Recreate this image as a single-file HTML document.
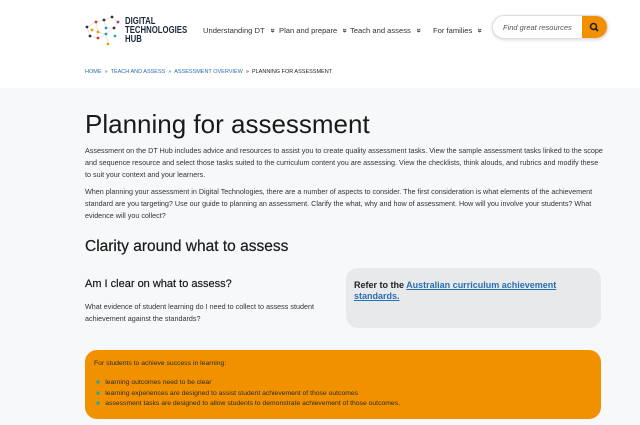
<!DOCTYPE html>
<html><head><meta charset="utf-8"><style>
*{margin:0;padding:0;box-sizing:border-box}
body{width:640px;height:425px;overflow:hidden;background:#f7f8fa;font-family:"Liberation Sans",sans-serif;color:#222;position:relative}
.hdr{position:absolute;left:0;top:0;width:640px;height:88px;background:#fff}
.abs{position:absolute}
.nav{font-size:7.6px;color:#333;top:26px;white-space:nowrap}
.ch{display:inline-block;margin-left:6px;font-size:8px;font-weight:bold;transform:rotate(90deg)}
.p{font-size:7.2px;line-height:12px;color:#333;left:85px;width:520px}
a{color:#2a6fb0}
</style></head><body>
<div class="hdr"></div>
<svg class="abs" style="left:84px;top:14px" width="40" height="34">
<g stroke="#ccc" stroke-width="0.5" fill="none"><path d="M3 13L12 8L20 6L28 3L34 8L30 14L22 20L14 24L6 22L3 13M12 8L14 18L22 20M20 6L22 14L30 14M22 20L24 30"/></g>
<g><circle cx="3" cy="13" r="1.4" fill="#333"/><circle cx="12" cy="8" r="1.4" fill="#d33"/><circle cx="20" cy="6" r="1.4" fill="#333"/><circle cx="28" cy="3" r="1.4" fill="#333"/><circle cx="34" cy="8" r="1.4" fill="#a3a"/><circle cx="30" cy="14" r="1.4" fill="#333"/><circle cx="22" cy="20" r="1.4" fill="#2aa"/><circle cx="14" cy="24" r="1.4" fill="#d33"/><circle cx="6" cy="22" r="1.4" fill="#333"/><circle cx="14" cy="18" r="1.4" fill="#e90"/><circle cx="22" cy="14" r="1.4" fill="#29c"/><circle cx="24" cy="30" r="1.4" fill="#e90"/><circle cx="8" cy="16" r="1.4" fill="#e90"/><circle cx="31" cy="22" r="1.4" fill="#2aa"/></g>
</svg>
<div class="abs" style="left:125px;top:17px;font-weight:bold;font-size:10.5px;line-height:9px;color:#1e2a3a;transform:scaleX(0.74);transform-origin:0 0">DIGITAL<br>TECHNOLOGIES<br>HUB</div>
<div class="abs nav" style="left:203px">Understanding DT<span class="ch">»</span></div>
<div class="abs nav" style="left:279px">Plan and prepare<span class="ch">»</span></div>
<div class="abs nav" style="left:350px">Teach and assess<span class="ch">»</span></div>
<div class="abs nav" style="left:433px">For families<span class="ch">»</span></div>
<div class="abs" style="left:492px;top:15px;width:116px;height:24px;border:1px solid #ddd;border-radius:12px;background:#fff;box-shadow:0 1px 3px rgba(0,0,0,.15);overflow:hidden">
<div style="position:absolute;left:10px;top:7px;font-size:7.5px;font-style:italic;color:#555">Find great resources</div>
<div style="position:absolute;right:0;top:0;width:25px;height:24px;background:#f29100"><svg width="25" height="24"><circle cx="11.5" cy="10.5" r="3" fill="none" stroke="#222" stroke-width="1.6"/><path d="M13.7 12.7L16 15" stroke="#222" stroke-width="1.8"/></svg></div></div>
<div class="abs" style="left:85px;top:69px;font-size:5.5px;color:#222"><a>HOME</a> &nbsp;<span style="color:#2a6fb0">»</span>&nbsp; <a>TEACH AND ASSESS</a> &nbsp;<span style="color:#2a6fb0">»</span>&nbsp; <a>ASSESSMENT OVERVIEW</a> &nbsp;»&nbsp; PLANNING FOR ASSESSMENT</div>
<div class="abs" style="left:85px;top:109px;font-size:26px;color:#1a1a1a">Planning for assessment</div>
<div class="abs p" style="top:145px">Assessment on the DT Hub includes advice and resources to assist you to create quality assessment tasks. View the sample assessment tasks linked to the scope and sequence resource and select those tasks suited to the curriculum content you are assessing. View the checklists, think alouds, and rubrics and modify these to suit your context and your learners.</div>
<div class="abs p" style="top:186px">When planning your assessment in Digital Technologies, there are a number of aspects to consider. The first consideration is what elements of the achievement standard are you targeting? Use our guide to planning an assessment. Clarify the what, why and how of assessment. How will you involve your students? What evidence will you collect?</div>
<div class="abs" style="left:85px;top:238px;font-size:15.5px;color:#1a1a1a;-webkit-text-stroke:0.2px #1a1a1a">Clarity around what to assess</div>
<div class="abs" style="left:85px;top:278px;font-size:11px;color:#1a1a1a;-webkit-text-stroke:0.2px #1a1a1a">Am I clear on what to assess?</div>
<div class="abs p" style="top:301px;width:240px">What evidence of student learning do I need to collect to assess student achievement against the standards?</div>
<div class="abs" style="left:346px;top:268px;width:255px;height:60px;background:#e8e9eb;border-radius:12px;padding:12px 8px;font-size:9px;font-weight:bold;line-height:11px;color:#222">Refer to the <a style="color:#2a6fb0;text-decoration:underline">Australian curriculum achievement standards.</a></div>
<div class="abs" style="left:85px;top:350px;width:516px;height:69px;background:#f29100;border-radius:12px;font-size:6.8px;color:#2a2a2a">
<div style="position:absolute;left:9px;top:10px">For students to achieve success in learning:</div>
<div style="position:absolute;left:11px;top:28px;line-height:10.7px">
<div><span style="color:#1aa;font-size:6px">■</span>&nbsp;&nbsp; learning outcomes need to be clear</div>
<div><span style="color:#1aa;font-size:6px">■</span>&nbsp;&nbsp; learning experiences are designed to assist student achievement of those outcomes</div>
<div><span style="color:#1aa;font-size:6px">■</span>&nbsp;&nbsp; assessment tasks are designed to allow students to demonstrate achievement of those outcomes.</div>
</div></div>
</body></html>
